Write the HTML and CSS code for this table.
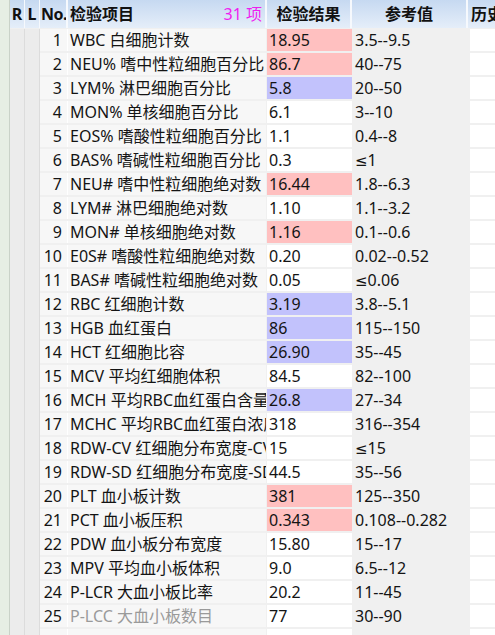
FILE: index.html
```html
<!DOCTYPE html>
<html lang="zh">
<head>
<meta charset="utf-8">
<link rel="stylesheet" href="styles.css">
</head>
<body>
<div class="grid">
  <div class="row head">
    <div class="c strip"></div>
    <div class="c r">R</div>
    <div class="c l">L</div>
    <div class="c no">No.</div>
    <div class="c item"><span>检验项目</span><span class="count">31 项</span></div>
    <div class="c res">检验结果</div>
    <div class="c ref">参考值</div>
    <div class="c hist">历史</div>
  </div>
  <div class="row"><div class="c strip"></div><div class="c r"></div><div class="c l"></div><div class="c no">1</div><div class="c item">WBC 白细胞计数</div><div class="c res hi">18.95</div><div class="c ref">3.5--9.5</div><div class="c hist"></div></div>
  <div class="row"><div class="c strip"></div><div class="c r"></div><div class="c l"></div><div class="c no">2</div><div class="c item">NEU% 嗜中性粒细胞百分比</div><div class="c res hi">86.7</div><div class="c ref">40--75</div><div class="c hist"></div></div>
  <div class="row"><div class="c strip"></div><div class="c r"></div><div class="c l"></div><div class="c no">3</div><div class="c item">LYM% 淋巴细胞百分比</div><div class="c res lo">5.8</div><div class="c ref">20--50</div><div class="c hist"></div></div>
  <div class="row"><div class="c strip"></div><div class="c r"></div><div class="c l"></div><div class="c no">4</div><div class="c item">MON% 单核细胞百分比</div><div class="c res">6.1</div><div class="c ref">3--10</div><div class="c hist"></div></div>
  <div class="row"><div class="c strip"></div><div class="c r"></div><div class="c l"></div><div class="c no">5</div><div class="c item">EOS% 嗜酸性粒细胞百分比</div><div class="c res">1.1</div><div class="c ref">0.4--8</div><div class="c hist"></div></div>
  <div class="row"><div class="c strip"></div><div class="c r"></div><div class="c l"></div><div class="c no">6</div><div class="c item">BAS% 嗜碱性粒细胞百分比</div><div class="c res">0.3</div><div class="c ref"><span class="sym">≤</span>1</div><div class="c hist"></div></div>
  <div class="row"><div class="c strip"></div><div class="c r"></div><div class="c l"></div><div class="c no">7</div><div class="c item">NEU# 嗜中性粒细胞绝对数</div><div class="c res hi">16.44</div><div class="c ref">1.8--6.3</div><div class="c hist"></div></div>
  <div class="row"><div class="c strip"></div><div class="c r"></div><div class="c l"></div><div class="c no">8</div><div class="c item">LYM# 淋巴细胞绝对数</div><div class="c res">1.10</div><div class="c ref">1.1--3.2</div><div class="c hist"></div></div>
  <div class="row"><div class="c strip"></div><div class="c r"></div><div class="c l"></div><div class="c no">9</div><div class="c item">MON# 单核细胞绝对数</div><div class="c res hi">1.16</div><div class="c ref">0.1--0.6</div><div class="c hist"></div></div>
  <div class="row"><div class="c strip"></div><div class="c r"></div><div class="c l"></div><div class="c no">10</div><div class="c item">E0S# 嗜酸性粒细胞绝对数</div><div class="c res">0.20</div><div class="c ref">0.02--0.52</div><div class="c hist"></div></div>
  <div class="row"><div class="c strip"></div><div class="c r"></div><div class="c l"></div><div class="c no">11</div><div class="c item">BAS# 嗜碱性粒细胞绝对数</div><div class="c res">0.05</div><div class="c ref"><span class="sym">≤</span>0.06</div><div class="c hist"></div></div>
  <div class="row"><div class="c strip"></div><div class="c r"></div><div class="c l"></div><div class="c no">12</div><div class="c item">RBC 红细胞计数</div><div class="c res lo">3.19</div><div class="c ref">3.8--5.1</div><div class="c hist"></div></div>
  <div class="row"><div class="c strip"></div><div class="c r"></div><div class="c l"></div><div class="c no">13</div><div class="c item">HGB 血红蛋白</div><div class="c res lo">86</div><div class="c ref">115--150</div><div class="c hist"></div></div>
  <div class="row"><div class="c strip"></div><div class="c r"></div><div class="c l"></div><div class="c no">14</div><div class="c item">HCT 红细胞比容</div><div class="c res lo">26.90</div><div class="c ref">35--45</div><div class="c hist"></div></div>
  <div class="row"><div class="c strip"></div><div class="c r"></div><div class="c l"></div><div class="c no">15</div><div class="c item">MCV 平均红细胞体积</div><div class="c res">84.5</div><div class="c ref">82--100</div><div class="c hist"></div></div>
  <div class="row"><div class="c strip"></div><div class="c r"></div><div class="c l"></div><div class="c no">16</div><div class="c item">MCH 平均RBC血红蛋白含量</div><div class="c res lo">26.8</div><div class="c ref">27--34</div><div class="c hist"></div></div>
  <div class="row"><div class="c strip"></div><div class="c r"></div><div class="c l"></div><div class="c no">17</div><div class="c item">MCHC 平均RBC血红蛋白浓度</div><div class="c res">318</div><div class="c ref">316--354</div><div class="c hist"></div></div>
  <div class="row"><div class="c strip"></div><div class="c r"></div><div class="c l"></div><div class="c no">18</div><div class="c item">RDW-CV 红细胞分布宽度-CV</div><div class="c res">15</div><div class="c ref"><span class="sym">≤</span>15</div><div class="c hist"></div></div>
  <div class="row"><div class="c strip"></div><div class="c r"></div><div class="c l"></div><div class="c no">19</div><div class="c item">RDW-SD 红细胞分布宽度-SD</div><div class="c res">44.5</div><div class="c ref">35--56</div><div class="c hist"></div></div>
  <div class="row"><div class="c strip"></div><div class="c r"></div><div class="c l"></div><div class="c no">20</div><div class="c item">PLT 血小板计数</div><div class="c res hi">381</div><div class="c ref">125--350</div><div class="c hist"></div></div>
  <div class="row"><div class="c strip"></div><div class="c r"></div><div class="c l"></div><div class="c no">21</div><div class="c item">PCT 血小板压积</div><div class="c res hi">0.343</div><div class="c ref">0.108--0.282</div><div class="c hist"></div></div>
  <div class="row"><div class="c strip"></div><div class="c r"></div><div class="c l"></div><div class="c no">22</div><div class="c item">PDW 血小板分布宽度</div><div class="c res">15.80</div><div class="c ref">15--17</div><div class="c hist"></div></div>
  <div class="row"><div class="c strip"></div><div class="c r"></div><div class="c l"></div><div class="c no">23</div><div class="c item">MPV 平均血小板体积</div><div class="c res">9.0</div><div class="c ref">6.5--12</div><div class="c hist"></div></div>
  <div class="row"><div class="c strip"></div><div class="c r"></div><div class="c l"></div><div class="c no">24</div><div class="c item">P-LCR 大血小板比率</div><div class="c res">20.2</div><div class="c ref">11--45</div><div class="c hist"></div></div>
  <div class="row"><div class="c strip"></div><div class="c r"></div><div class="c l"></div><div class="c no">25</div><div class="c item dim">P-LCC 大血小板数目</div><div class="c res">77</div><div class="c ref">30--90</div><div class="c hist"></div></div>
  <div class="row"><div class="c strip"></div><div class="c r"></div><div class="c l"></div><div class="c no"></div><div class="c item"></div><div class="c res"></div><div class="c ref"></div><div class="c hist"></div></div>
</div>
</body>
</html>
```

FILE: styles.css
```css
html, body {
  margin: 0;
  padding: 0;
  background: #f0f0f0;
  overflow: hidden;
}
body {
  font-family: "Noto Sans", "Noto Sans CJK SC", sans-serif;
  font-size: 16px;
  color: #141414;
}
.grid {
  display: flex;
  flex-direction: column;
  width: 495px;
}
.row {
  display: grid;
  grid-template-columns: 10px 15px 15px 28px 199px 85px 116px 27px;
  height: 24px;
  background: #f0f0f0;
}
.c {
  box-sizing: border-box;
  height: 22px;
  line-height: 22px;
  white-space: nowrap;
  overflow: hidden;
}
.sym {
  font-family: "DejaVu Sans", sans-serif;
  font-size: 15px;
}
.strip {
  height: 24px;
  background: #e6eee4;
  border-right: 1px solid #c9d2c8;
}
.r, .l {
  height: 24px;
  background: #ececec;
  border-right: 1px solid #dcdcdc;
}
.no {
  background: #f7f7f7;
  text-align: right;
  padding-right: 5px;
  border-right: 1px solid #ffffff;
}
.item {
  background: #f7f7f7;
  padding-left: 2px;
  margin-right: 1px;
}
.item.dim { color: #9a9a9a; }
.res {
  background: #ffffff;
  padding-left: 2px;
}
.res.hi { background: #ffc0c0; }
.res.lo { background: #c2c2fc; }
.ref {
  height: 24px;
  background: #f0f0f0;
  padding-left: 3px;
}
.hist {
  background: #ffffff;
  margin-left: 2px;
}

.head {
  height: 29px;
  background: #f0f0f0;
}
.head .c {
  height: 28px;
  line-height: 28px;
  font-weight: bold;
  color: #111;
  background: linear-gradient(#c6d9f1, #e5eef9);
  border-right: 2px solid #f6f9fd;
  padding: 0;
  margin: 0;
}
.head .strip {
  background: #e6eee4;
  border-right: 1px solid #c9d2c8;
  height: 29px;
}
.head .r, .head .l { text-align: center; border-right: 1px solid #f6f9fd; }
.head .no { text-align: left; padding-left: 1px; letter-spacing: -0.5px; }
.head .item {
  display: flex;
  justify-content: space-between;
  padding: 0 3px 0 2px;
}
.head .count {
  font-weight: normal;
  color: #f01cf0;
}
.head .res, .head .ref { text-align: center; }
.head .hist { padding-left: 3px; margin-left: 0; border-right: 0; }
```
